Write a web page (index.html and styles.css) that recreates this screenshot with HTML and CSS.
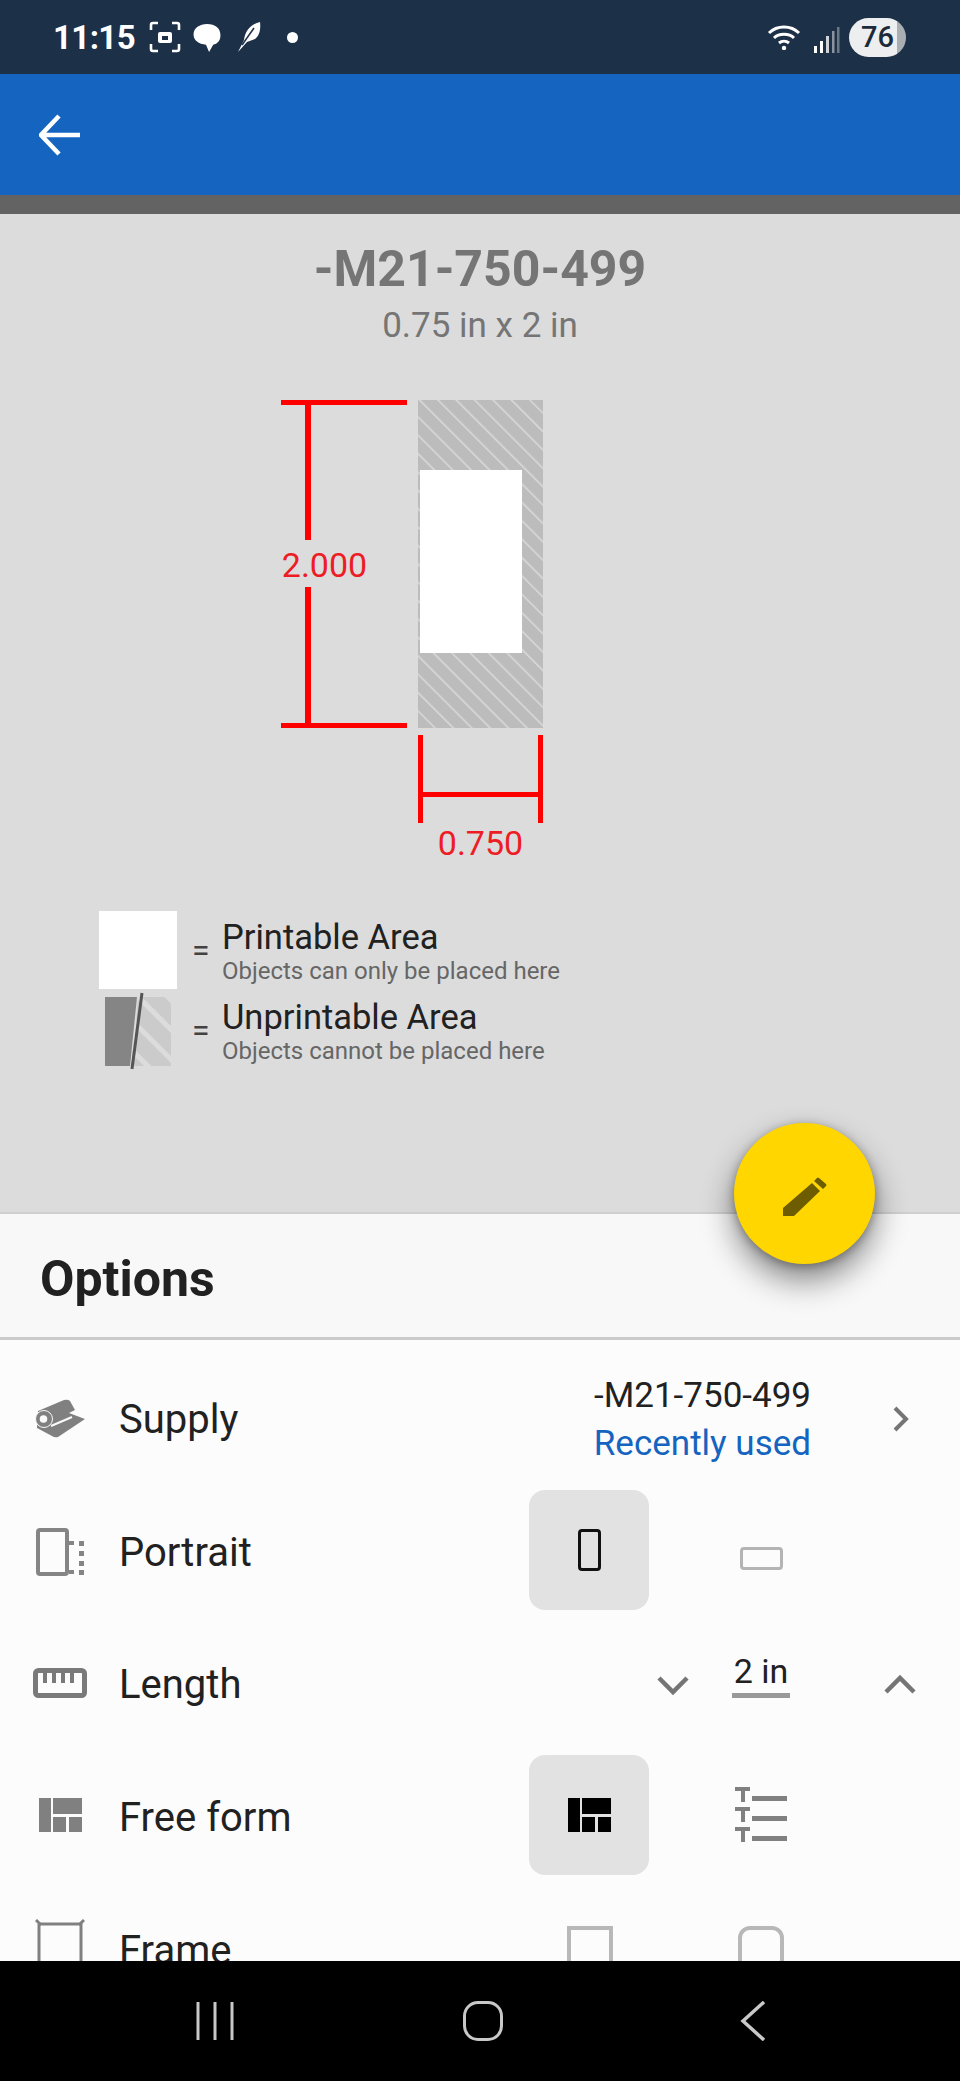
FILE: index.html
```html
<!DOCTYPE html>
<html lang="en">
  <head>
    <meta charset="UTF-8" />
    <meta name="viewport" content="width=device-width, initial-scale=1.0" />
    <title>Supply options</title>
    <link rel="stylesheet" href="styles.css">
  </head>
  <body>
    <div class="screen">
      <header class="status">
        <span class="time">11:15</span>
        <svg class="st-shot" viewBox="0 0 32 32"><path d="M2 9V4q0-2 2-2h5M23 2h5q2 0 2 2v5M30 23v5q0 2-2 2h-5M9 30H4q-2 0-2-2v-5" fill="none" stroke="#fff" stroke-width="2.6"/><rect x="9" y="11" width="14" height="11" rx="2" fill="#fff"/><rect x="13" y="15" width="6" height="4" fill="#1c3048"/></svg>
        <svg class="st-bubble" viewBox="0 0 28 28"><path d="M14 1c8 0 13 4 13 11 0 5-3 8-7 9l-4 7-3-7C6 20 1 17 1 11 1 5 7 1 14 1z" fill="#fff"/></svg>
        <svg class="st-feather" viewBox="0 0 24 30"><path d="M1 30 7 18C8 9 14 2 23 0c1 8-1 14-5 17l-8 3z" fill="#fff"/><path d="M5 23 17 6" stroke="#1c3048" stroke-width="1.500"/></svg>
        <span class="st-dot"></span>
        <svg class="st-wifi" viewBox="0 0 34 26"><path d="M2 9C10 1 24 1 32 9M7 14C12 9 22 9 27 14M12 19c3-2.500 7-2.500 10 0" fill="none" stroke="#fff" stroke-width="3"/><circle cx="17" cy="24" r="2.200" fill="#fff"/></svg>
        <svg class="st-signal" viewBox="0 0 26 26"><rect x="0" y="19" width="3" height="7" fill="#fff"/><rect x="6" y="14" width="3" height="12" fill="#fff"/><rect x="12" y="9" width="3" height="17" fill="#cfd3d8"/><rect x="18" y="4" width="2.500" height="22" fill="#8b949e"/><rect x="23" y="0" width="2.500" height="26" fill="#6e7883"/></svg>
        <span class="battery">76</span>
      </header>

      <div class="appbar">
        <svg class="back" viewBox="0 0 42 42"><path d="M41 21H4M20 2 2 21l18 19" fill="none" stroke="#fff" stroke-width="4.500"/></svg>
      </div>
      <div class="appbar-edge"></div>

      <main class="preview">
        <h1 class="name">-M21-750-499</h1>
        <p class="size">0.75 in x 2 in</p>

        <svg class="diagram" viewBox="0 353 960 527">
          <defs>
            <pattern id="hatch" width="13" height="13" patternUnits="userSpaceOnUse" patternTransform="rotate(-45)">
              <rect width="13" height="13" fill="#bcbcbc"/>
              <rect x="0" width="1.500" height="13" fill="#dadada"/>
            </pattern>
          </defs>
          <rect x="418" y="400" width="125" height="328" fill="url(#hatch)"/>
          <rect x="420" y="470" width="102" height="183" fill="#fff"/>
          <g fill="#f00">
            <rect x="281" y="400" width="126" height="5"/>
            <rect x="305" y="405" width="6" height="135"/>
            <rect x="305" y="587" width="6" height="136"/>
            <rect x="281" y="723" width="126" height="5"/>
            <rect x="418" y="735" width="5" height="88"/>
            <rect x="538" y="735" width="5" height="88"/>
            <rect x="423" y="792" width="115" height="5"/>
          </g>
          <text class="dim" x="324.500" y="577">2.000</text>
          <text class="dim" x="480.500" y="855">0.750</text>
        </svg>

        <div class="legend">
          <div class="legend-row">
            <div class="swatch swatch-white"></div>
            <span class="equals">=</span>
            <div class="legend-text">
              <div class="legend-title">Printable Area</div>
              <div class="legend-sub">Objects can only be placed here</div>
            </div>
          </div>
          <div class="legend-row">
            <svg class="swatch" viewBox="0 0 78 78">
              <defs>
                <pattern id="hatch2" width="21" height="21" patternUnits="userSpaceOnUse" patternTransform="rotate(-45)">
                  <rect width="21" height="21" fill="#cbcbcb"/>
                  <rect width="5" height="21" fill="#dcdcdc"/>
                </pattern>
              </defs>
              <path d="M6 6h32l-7 69H6z" fill="#858585"/>
              <path d="M39 6h33v69H34z" fill="url(#hatch2)"/>
              <path d="M43 2 33 78" stroke="#555" stroke-width="3"/>
            </svg>
            <span class="equals">=</span>
            <div class="legend-text">
              <div class="legend-title">Unprintable Area</div>
              <div class="legend-sub">Objects cannot be placed here</div>
            </div>
          </div>
        </div>
      </main>

      <button class="fab">
        <svg viewBox="0 0 46 40"><path d="M1 39V31L30 6l8 8-26 25z" fill="#6d5c00"/><path d="M32 4l3-3q1-1 2 0l7 6q1 1 0 2l-3 3z" fill="#6d5c00"/></svg>
      </button>

      <section class="sheet">
        <h2 class="sheet-title">Options</h2>
        <div class="options">
          <div class="row">
            <div class="row-icon">
              <svg class="ic-supply" viewBox="0 0 50 40"><path d="M3 12 29 1q4-1 6 1l5 9-6 3 16 6-27 18q-3 1-6-1L2 29z" fill="#808080"/><circle cx="9" cy="20" r="8.500" fill="#808080" stroke="#fafafa" stroke-width="1"/><circle cx="8.500" cy="20" r="3.800" fill="#fafafa"/><path d="M16 27 37 18" stroke="#fafafa" stroke-width="2"/></svg>
            </div>
            <span class="row-label">Supply</span>
            <div class="supply-info">
              <div>-M21-750-499</div>
              <div class="recent">Recently used</div>
            </div>
            <svg class="chev" viewBox="0 0 60 40"><path d="M25 9 36 20 25 31" fill="none" stroke="#757575" stroke-width="4"/></svg>
          </div>

          <div class="row">
            <div class="row-icon">
              <svg class="ic-portrait" viewBox="0 0 50 48"><rect x="2" y="2" width="29" height="44" rx="2" fill="none" stroke="#858585" stroke-width="4"/><g fill="#858585"><rect x="33" y="13" width="5" height="4"/><rect x="33" y="42" width="5" height="4"/><rect x="43" y="13" width="5" height="5"/><rect x="43" y="23" width="5" height="5"/><rect x="43" y="33" width="5" height="5"/><rect x="43" y="42" width="5" height="5"/></g></svg>
            </div>
            <span class="row-label">Portrait</span>
            <div class="toggles">
              <div class="toggle on"><div class="shape shape-port"></div></div>
              <div class="toggle"><div class="shape shape-land"></div></div>
            </div>
          </div>

          <div class="row">
            <div class="row-icon">
              <svg class="ic-ruler" viewBox="0 0 54 30"><rect x="2.500" y="2.500" width="49" height="25" rx="3" fill="none" stroke="#7a7a7a" stroke-width="5"/><path d="M12 3V15M21 3V15M30 3V15M39 3V15" stroke="#7a7a7a" stroke-width="4"/></svg>
            </div>
            <span class="row-label">Length</span>
            <div class="stepper">
              <svg class="chev" viewBox="0 0 60 40"><path d="M16 13 30 27 44 13" fill="none" stroke="#757575" stroke-width="4.500"/></svg>
              <span class="step-value">2 in</span>
              <svg class="chev" viewBox="0 0 60 40"><path d="M16 27 30 13 44 27" fill="none" stroke="#757575" stroke-width="4.500"/></svg>
            </div>
          </div>

          <div class="row">
            <div class="row-icon">
              <svg class="ic-grid ic-grid-row" viewBox="0 0 43 34"><path d="M0 0H12V34H0zM14 0H43V16H14zM14 19H27V34H14zM30 19H43V34H30z" fill="#808080"/></svg>
            </div>
            <span class="row-label">Free form</span>
            <div class="toggles">
              <div class="toggle on"><svg class="ic-grid" viewBox="0 0 43 34"><path d="M0 0H12V34H0zM14 0H43V16H14zM14 19H27V34H14zM30 19H43V34H30z" fill="#000"/></svg></div>
              <div class="toggle">
                <svg class="ic-list" viewBox="0 0 52 56"><g fill="#808080"><path d="M0 0H15V4H10V15H6V4H0zM0 20H15V24H10V35H6V24H0zM0 40H15V44H10V55H6V44H0z"/><rect x="17" y="9" width="35" height="5"/><rect x="17" y="29" width="35" height="5"/><rect x="17" y="49" width="35" height="5"/></g></svg>
              </div>
            </div>
          </div>

          <div class="row">
            <div class="row-icon row-icon-top">
              <svg class="ic-frame" viewBox="0 0 50 50"><path d="M4 5H46V50M4 5V50" fill="none" stroke="#808080" stroke-width="3"/><path d="M1 1 6 6M49 1 44 6" stroke="#808080" stroke-width="3"/></svg>
            </div>
            <span class="row-label">Frame</span>
            <div class="toggles toggles-top">
              <div class="toggle"><div class="shape shape-square"></div></div>
              <div class="toggle"><div class="shape shape-round"></div></div>
            </div>
          </div>
        </div>
      </section>

      <nav class="navbar">
        <svg class="nav-menu" viewBox="0 0 38 38"><path d="M2 0V38M19 0V38M36 0V38" stroke="#c8c8c8" stroke-width="3"/></svg>
        <div class="nav-home"></div>
        <svg class="nav-back" viewBox="0 0 26 40"><path d="M24 1 3 20 24 39" fill="none" stroke="#c8c8c8" stroke-width="3.500"/></svg>
      </nav>
    </div>
  </body>
</html>
```

FILE: styles.css
```css
* {
  box-sizing: border-box;
}
body {
  margin: 0;
  font-family: Roboto, "Liberation Sans", sans-serif;
  background-color: #fcfcfc;
}
svg {
  display: block;
}
.screen {
  position: relative;
  width: 960px;
  height: 2081px;
  overflow: hidden;
  display: flex;
  flex-direction: column;
}

/* status bar */
.status {
  height: 74px;
  flex: none;
  background-color: #1c3048;
  display: flex;
  align-items: center;
  padding-left: 53px;
  color: #fff;
}
.time {
  font-size: 33px;
  font-weight: 700;
  width: 96px;
  letter-spacing: -0.6px;
}
.st-shot {
  width: 32px;
  height: 32px;
}
.st-bubble {
  width: 30px;
  height: 29px;
  margin-left: 11px;
}
.st-feather {
  width: 24px;
  height: 30px;
  margin-left: 15px;
}
.st-dot {
  width: 11px;
  height: 11px;
  border-radius: 50%;
  background-color: #fff;
  margin-left: 26px;
}
.st-wifi {
  width: 34px;
  height: 26px;
  margin-left: auto;
}
.st-signal {
  width: 26px;
  height: 26px;
  margin-left: 13px;
  margin-top: 6px;
}
.battery {
  width: 57px;
  height: 39px;
  margin-left: 9px;
  margin-right: 54px;
  border-radius: 20px;
  background: linear-gradient(90deg, #eceef0 84%, #a9aeb3 84%);
  color: #1c2a3a;
  font-size: 29px;
  font-weight: 500;
  line-height: 39px;
  text-align: center;
}

/* app bar */
.appbar {
  height: 121px;
  flex: none;
  background-color: #1565c0;
  display: flex;
  align-items: center;
  padding-left: 39px;
}
.back {
  width: 42px;
  height: 42px;
}
.appbar-edge {
  height: 19px;
  flex: none;
  background-color: #636363;
}

/* preview */
.preview {
  height: 998px;
  flex: none;
  background-color: #dcdcdc;
  padding-top: 27px;
  text-align: center;
}
.name {
  margin: 0;
  font-size: 50px;
  line-height: 56px;
  font-weight: 700;
  color: #757575;
}
.size {
  margin: 0;
  padding-top: 1px;
  height: 56px;
  font-size: 35px;
  line-height: 56px;
  color: #757575;
}
.diagram {
  width: 960px;
  height: 527px;
}
.dim {
  font-size: 34px;
  fill: #ee1c25;
  text-anchor: middle;
}
.legend {
  padding: 30px 0 0 99px;
  text-align: left;
}
.legend-row {
  display: flex;
  align-items: center;
  height: 80px;
}
.swatch {
  width: 78px;
  height: 78px;
  flex: none;
}
.swatch-white {
  background-color: #fff;
}
.equals {
  width: 46px;
  padding-left: 15px;
  font-size: 32px;
  color: #424242;
}
.legend-text {
  padding-top: 4px;
}
.legend-title {
  font-size: 34.5px;
  line-height: 38px;
  color: #212121;
  margin-left: -1px;
}
.legend-sub {
  font-size: 24px;
  line-height: 30px;
  color: #666;
  margin-left: -1px;
}

/* floating button */
.fab {
  position: absolute;
  left: 734px;
  top: 1123px;
  width: 141px;
  height: 141px;
  border: none;
  border-radius: 50%;
  background-color: #ffd600;
  box-shadow: 0 16px 32px rgba(0, 0, 0, 0.48), 0 2px 10px rgba(0, 0, 0, 0.3);
  display: flex;
  align-items: center;
  justify-content: center;
  padding: 0;
  z-index: 2;
}
.fab svg {
  width: 46px;
  height: 40px;
  margin-top: 6px;
}

/* bottom sheet */
.sheet {
  flex: 1;
  min-height: 0;
  background-color: #fcfcfc;
  overflow: hidden;
}
.sheet-title {
  margin: 0;
  height: 128px;
  padding-left: 40px;
  background-color: #f8f8f8;
  border-top: 2px solid #cfcfcf;
  border-bottom: 3px solid #cbcbcb;
  font-size: 50px;
  font-weight: 700;
  line-height: 130px;
  color: #212121;
}
.options {
  padding-top: 13px;
}
.row {
  height: 132.7px;
  display: flex;
  align-items: center;
  padding-right: 30px;
}
.row-icon {
  width: 119px;
  margin-right: 1px;
  flex: none;
  display: flex;
  justify-content: center;
}
.row-icon-top {
  align-self: flex-start;
  padding-top: 35px;
}
.row-label {
  margin-left: -1px;
  font-size: 40px;
  color: #212121;
}
.ic-supply {
  width: 50px;
  height: 40px;
}
.ic-portrait {
  width: 50px;
  height: 48px;
  margin-left: 2px;
}
.ic-ruler {
  width: 54px;
  height: 30px;
  margin-top: -4px;
}
.ic-grid {
  width: 43px;
  height: 34px;
}
.ic-grid-row {
  margin-top: -4px;
  margin-left: 2px;
}
.ic-list {
  width: 52px;
  height: 56px;
}
.ic-frame {
  width: 50px;
  height: 50px;
}
.supply-info {
  margin-left: auto;
  padding-top: 2px;
  font-size: 35px;
  line-height: 48px;
  text-align: right;
  color: #212121;
  margin-right: 59px;
}
.recent {
  color: #1565c0;
}
.chev {
  width: 60px;
  height: 40px;
  flex: none;
}
.toggles {
  margin-left: auto;
  margin-right: 109px;
  margin-top: -5px;
  display: flex;
  gap: 52px;
}
.toggles-top {
  align-self: flex-start;
  margin-top: 0;
  padding-top: 9px;
}
.toggle {
  width: 120px;
  height: 120px;
  border-radius: 16px;
  display: flex;
  align-items: center;
  justify-content: center;
}
.toggle.on {
  background-color: #e2e2e2;
}
.shape {
  border-style: solid;
}
.shape-port {
  width: 23px;
  height: 42px;
  border-width: 3.5px;
  border-color: #111;
  border-radius: 4px;
}
.shape-land {
  width: 43px;
  height: 23px;
  border-width: 3.5px;
  border-color: #b4b4b4;
  border-radius: 4px;
  margin-top: 18px;
}
.shape-square,
.shape-round {
  width: 46px;
  height: 46px;
  border-width: 4px;
  border-color: #b8b8b8;
  align-self: flex-start;
  margin-top: 33px;
}
.shape-square {
  margin-left: 2px;
}
.shape-round {
  border-radius: 12px;
}
.stepper {
  margin-left: auto;
  display: flex;
  align-items: center;
}
.step-value {
  width: 58px;
  margin: 0 51px 23px 0;
  font-size: 34px;
  line-height: 44px;
  text-align: center;
  white-space: nowrap;
  color: #212121;
  border-bottom: 5px solid #999;
}
.stepper .chev:first-child {
  margin-left: 1px;
  margin-right: 29px;
}
.stepper .chev:last-child {
  margin-left: 29px;
}

/* nav bar */
.navbar {
  position: absolute;
  left: 0;
  right: 0;
  bottom: 0;
  height: 120px;
  background-color: #000;
  z-index: 3;
  display: flex;
  align-items: center;
  padding-left: 196px;
}
.nav-menu {
  width: 38px;
  height: 38px;
}
.nav-home {
  width: 40px;
  height: 40px;
  margin-left: 229px;
  border: 3.5px solid #c8c8c8;
  border-radius: 15px;
}
.nav-back {
  width: 26px;
  height: 40px;
  margin-left: 237px;
}
```
